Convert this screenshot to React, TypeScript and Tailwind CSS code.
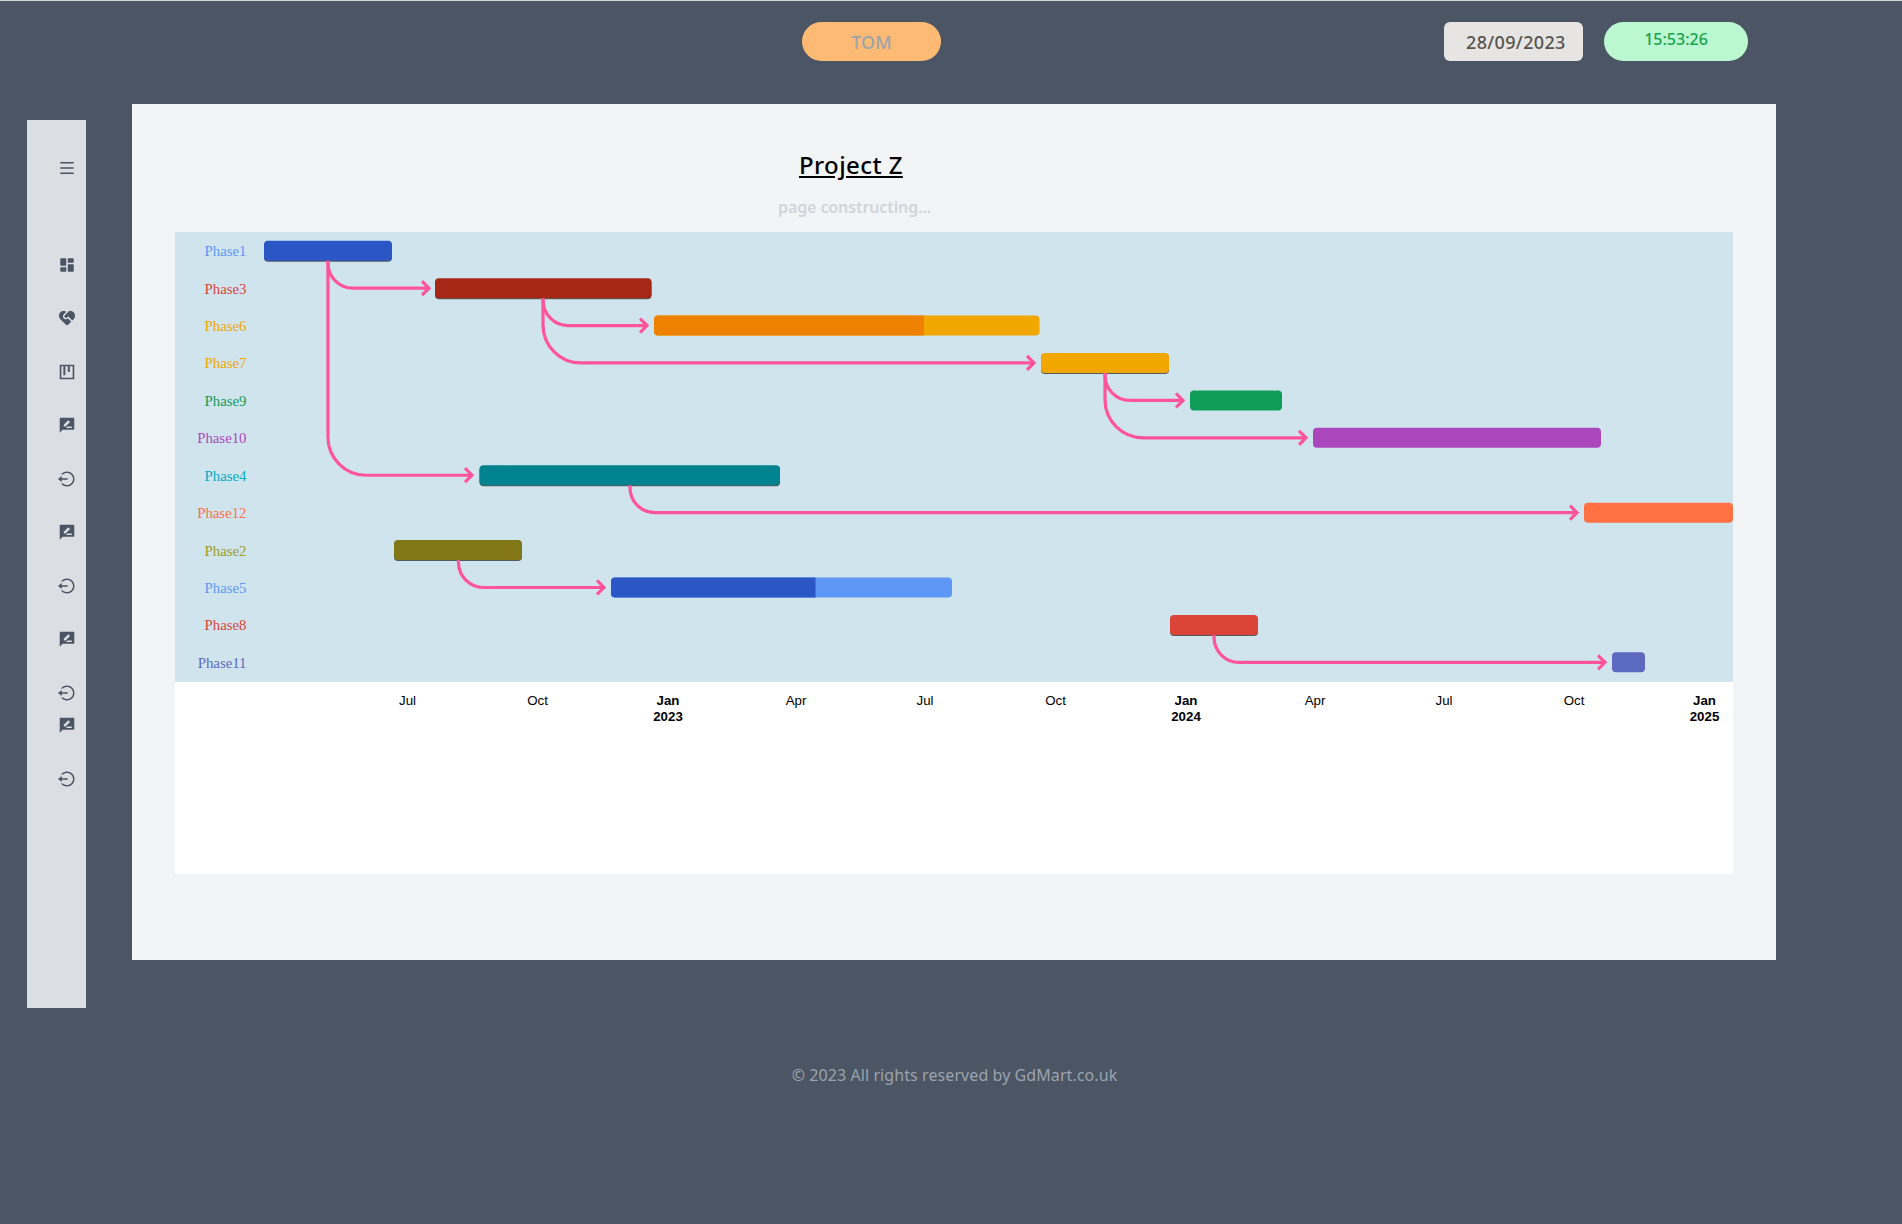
import type { IconType } from "react-icons";
import {
  RiDashboardFill,
  RiLogoutCircleLine,
  RiMenuLine,
  RiServiceFill,
} from "react-icons/ri";

const sans = "font-['Noto_Sans',sans-serif]";

const ROW_H = 37.42;
const rowY = (i: number) => 232 + ROW_H / 2 + ROW_H * i;

type Phase = {
  name: string;
  label: string;
  x1: number;
  x2: number;
  color: string;
  done?: { x: number; color: string };
  shadow?: boolean;
};

const phases: Phase[] = [
  { name: "Phase1", label: "#5e97f6", x1: 264, x2: 392, color: "#2a56c6", shadow: true },
  { name: "Phase3", label: "#db4437", x1: 435, x2: 651.5, color: "#a52714", shadow: true },
  { name: "Phase6", label: "#f2a600", x1: 654, x2: 1039.5, color: "#f2a600", done: { x: 924, color: "#ef8100" } },
  { name: "Phase7", label: "#f2a600", x1: 1041, x2: 1169, color: "#f2a600", shadow: true },
  { name: "Phase9", label: "#0f9d58", x1: 1190, x2: 1282, color: "#0f9d58" },
  { name: "Phase10", label: "#ab47bc", x1: 1313, x2: 1601, color: "#ab47bc" },
  { name: "Phase4", label: "#00acc1", x1: 479.5, x2: 780, color: "#00838f", shadow: true },
  { name: "Phase12", label: "#ff7043", x1: 1584, x2: 1733, color: "#ff7043" },
  { name: "Phase2", label: "#9e9d24", x1: 394, x2: 522, color: "#827717", shadow: true },
  { name: "Phase5", label: "#5e97f6", x1: 611, x2: 952, color: "#5e97f6", done: { x: 815.5, color: "#2a56c6" } },
  { name: "Phase8", label: "#db4437", x1: 1170, x2: 1258, color: "#db4437", shadow: true },
  { name: "Phase11", label: "#5c6bc0", x1: 1612, x2: 1645, color: "#5c6bc0" },
];

// from bar (x, row) down to target row, then across to the tip
const arrows = [
  { x: 328, from: 0, to: 1, tip: 429, r: 25 },
  { x: 328, from: 0, to: 6, tip: 472, r: 38 },
  { x: 543, from: 1, to: 2, tip: 647, r: 25 },
  { x: 543, from: 1, to: 3, tip: 1034, r: 38 },
  { x: 1105, from: 3, to: 4, tip: 1183, r: 25 },
  { x: 1105, from: 3, to: 5, tip: 1306, r: 38 },
  { x: 630, from: 6, to: 7, tip: 1577, r: 25 },
  { x: 458.5, from: 8, to: 9, tip: 604, r: 25 },
  { x: 1214, from: 10, to: 11, tip: 1605, r: 25 },
];

const ticks = [
  { x: 407.5, label: "Jul" },
  { x: 537.5, label: "Oct" },
  { x: 668, label: "Jan", year: "2023" },
  { x: 796, label: "Apr" },
  { x: 925, label: "Jul" },
  { x: 1055.5, label: "Oct" },
  { x: 1186, label: "Jan", year: "2024" },
  { x: 1315, label: "Apr" },
  { x: 1444, label: "Jul" },
  { x: 1574, label: "Oct" },
  { x: 1704.5, label: "Jan", year: "2025" },
];

function KanbanIcon({ className }: { className?: string }) {
  return (
    <svg viewBox="0.85 0.85 22.3 22.3" fill="currentColor" className={className}>
      <path d="M3 3h18v18H3V3zm2 2v14h14V5H5z" />
      <path d="M7.5 5h2.5v11H7.5zM13 5h2.5v7H13z" />
    </svg>
  );
}

function ChatPenIcon({ className }: { className?: string }) {
  return (
    <svg viewBox="0.85 0.85 22.3 22.3" fill="currentColor" className={className}>
      <path
        fillRule="evenodd"
        d="M3 4a1 1 0 0 1 1-1h16a1 1 0 0 1 1 1v13a1 1 0 0 1-1 1H6.5L3 21.5V4zm10.6 2.2L8 11.8V14h2.2l5.6-5.6-2.2-2.2zM12.5 14l-1.8 1.6H18V14h-5.5z"
      />
    </svg>
  );
}

const navItems: { icon: IconType | typeof KanbanIcon; className: string }[] = [
  { icon: RiMenuLine, className: "mt-[38.5px]" },
  { icon: RiDashboardFill, className: "mt-[79px]" },
  { icon: RiServiceFill, className: "mt-[35px]" },
  { icon: KanbanIcon, className: "mt-[36px]" },
  { icon: ChatPenIcon, className: "mt-[35px]" },
  { icon: RiLogoutCircleLine, className: "mt-[36px]" },
  { icon: ChatPenIcon, className: "mt-[35px]" },
  { icon: RiLogoutCircleLine, className: "mt-[36px]" },
  { icon: ChatPenIcon, className: "mt-[35px]" },
  { icon: RiLogoutCircleLine, className: "mt-[36px]" },
  { icon: ChatPenIcon, className: "mt-[14px]" },
  { icon: RiLogoutCircleLine, className: "mt-[36px]" },
];

function GanttChart() {
  return (
    <svg viewBox="175 232 1558 642" className="block h-[642px] w-[1558px] bg-white">
      <rect x="175" y="232" width="1558" height="450" fill="#d0e4ee" />

      {phases.map((p, i) => (
        <text
          key={p.name}
          x="246.5"
          y={rowY(i) + 5.5}
          textAnchor="end"
          fill={p.label}
          className="font-['Liberation_Serif',serif] text-[14.8px]"
        >
          {p.name}
        </text>
      ))}

      {phases.map((p, i) => {
        const top = rowY(i) - 10;
        return (
          <g key={p.name}>
            {p.shadow && <rect x={p.x1} y={top + 1} width={p.x2 - p.x1} height="20" rx="4" fill="#000" fillOpacity="0.6" />}
            <rect x={p.x1} y={top} width={p.x2 - p.x1} height="20" rx="4" fill={p.color} />
            {p.done && (
              <path
                d={`M${p.done.x} ${top}H${p.x1 + 4}a4 4 0 0 0 -4 4V${top + 16}a4 4 0 0 0 4 4H${p.done.x}Z`}
                fill={p.done.color}
              />
            )}
          </g>
        );
      })}

      {arrows.map((a, i) => {
        const y = rowY(a.to);
        const start = rowY(a.from) + 10;
        return (
          <path
            key={i}
            d={`M${a.x} ${start}V${y - a.r}A${a.r} ${a.r} 0 0 0 ${a.x + a.r} ${y}H${a.tip}M${a.tip - 7} ${y - 7}L${a.tip} ${y}L${a.tip - 7} ${y + 7}`}
            fill="none"
            stroke="#ff5499"
            strokeWidth="3.2"
          />
        );
      })}

      {ticks.map((t) => (
        <g key={t.x} className="font-['Liberation_Sans',sans-serif] text-[13.3px]" fill="#000" textAnchor="middle">
          <text x={t.x} y="704.5" fontWeight={t.year ? 700 : 400}>
            {t.label}
          </text>
          {t.year && (
            <text x={t.x} y="720.5" fontWeight={700}>
              {t.year}
            </text>
          )}
        </g>
      ))}
    </svg>
  );
}

export default function App() {
  return (
    <div className={`h-[1224px] overflow-hidden border-t border-[#d4d4d4] bg-[#4b5563] ${sans}`}>
      <header className="flex h-[103px] items-start pl-[802px] pt-[21px]">
        <div className="flex h-[39px] w-[139px] items-center justify-center rounded-full bg-[#fdba74] text-lg font-medium text-[#9ca3af]">
          TOM
        </div>
        <div className="ml-[503px] flex h-[39px] w-[139px] items-center rounded-md bg-[#e7e5e4] pl-[22px] text-lg font-medium tracking-[0.35px] text-[#57534e]">
          28/09/2023
        </div>
        <div className="ml-[21px] flex h-[39px] w-[144px] justify-center rounded-full bg-[#bbf7d0] pt-[5px] text-base font-medium text-[#16a34a]">
          15:53:26
        </div>
      </header>

      <div className="flex items-start pl-[27px]">
        <nav className="mt-4 flex h-[888px] w-[59px] flex-col items-start bg-[#dbdee3] pl-[30.5px] text-[#4b5563]">
          {navItems.map((item, i) => (
            <item.icon key={i} className={`size-[18px] ${item.className}`} />
          ))}
        </nav>

        <main className="ml-[46px] h-[856px] w-[1644px] bg-[#f3f4f6] px-[43px] pt-[45px]">
          <h1 className="ml-[624px] text-2xl font-medium leading-8 tracking-[0.4px] text-black underline">Project Z</h1>
          <p className="ml-[603px] mt-[14px] h-[37px] text-base font-semibold leading-6 tracking-[-0.1px] text-[#d1d5db]">
            page constructing...
          </p>
          <GanttChart />
        </main>
      </div>

      <footer className="mt-[55px] pl-[7px] text-center text-base leading-6 tracking-[0.08px] text-[#9ca3af]">
        © 2023 All rights reserved by GdMart.co.uk
      </footer>
    </div>
  );
}
